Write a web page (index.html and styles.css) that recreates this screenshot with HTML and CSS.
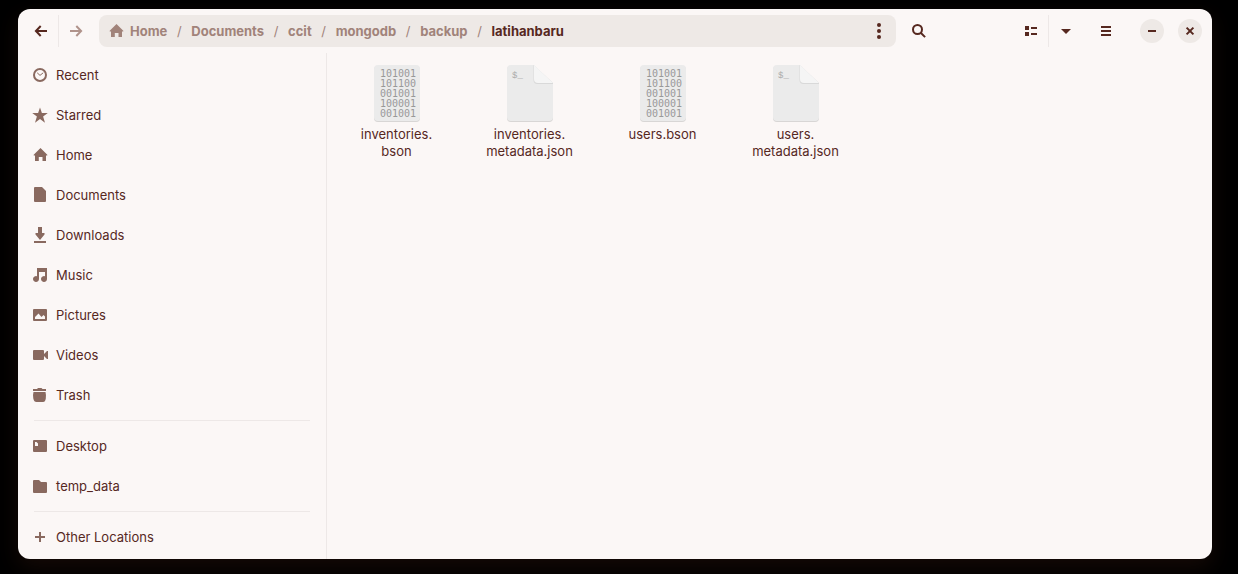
FILE: index.html
```html
<!DOCTYPE html>
<html lang="en">
<head>
<meta charset="utf-8">
<meta name="viewport" content="width=device-width, initial-scale=1">
<title>latihanbaru</title>
<link rel="stylesheet" href="styles.css">
</head>
<body>
<svg class="sprite" aria-hidden="true">
  <symbol id="home" viewBox="0 0 16 16"><path d="M8.5 1 15.3 7.8V8.5H14V14H10.5V10H6.8V14H3V8.5H1.7V7.8Z"/></symbol>
  <symbol id="sheet" viewBox="0 0 46 57">
    <rect y="1" width="46" height="56" rx="4" fill="#d8d6d5"/>
    <rect width="46" height="56" rx="4" fill="#ebebeb"/>
  </symbol>
  <symbol id="folded" viewBox="0 0 46 57">
    <path fill="#d8d6d5" d="M4 1H27L46 19V53a4 4 0 0 1-4 4H4a4 4 0 0 1-4-4V5a4 4 0 0 1 4-4Z"/>
    <path fill="#ebebeb" d="M4 0H27L46 18V52a4 4 0 0 1-4 4H4a4 4 0 0 1-4-4V4a4 4 0 0 1 4-4Z"/>
    <path fill="#d9d9d9" d="M26.5 0V15a4 4 0 0 0 4 4H46V18Z"/>
    <path fill="#f5f5f5" d="M27 0V14a4 4 0 0 0 4 4H46Z"/>
  </symbol>
</svg>

<div class="window">
  <header class="header">
    <div class="linked">
      <button class="tool" type="button" aria-label="Back"><svg class="icon" viewBox="0 0 16 16"><path class="line" d="M14 8H3.5M7.7 3 2.9 8l4.8 5"/></svg></button>
      <button class="tool" type="button" aria-label="Forward" disabled><svg class="icon" viewBox="0 0 16 16"><path class="line" d="M2 8H12.5M8.3 3l4.8 5-4.8 5"/></svg></button>
    </div>
    <div class="pathbar">
      <nav class="crumbs" aria-label="Path">
        <a class="crumb" href="#"><svg class="icon" aria-hidden="true"><use href="#home"/></svg>Home</a><span class="slash">/</span>
        <a class="crumb" href="#">Documents</a><span class="slash">/</span>
        <a class="crumb" href="#">ccit</a><span class="slash">/</span>
        <a class="crumb" href="#">mongodb</a><span class="slash">/</span>
        <a class="crumb" href="#">backup</a><span class="slash">/</span>
        <a class="crumb current" href="#" aria-current="page">latihanbaru</a>
      </nav>
      <button class="tool" type="button" aria-label="Folder menu"><svg class="icon" viewBox="0 0 16 16"><circle cx="8" cy="2" r="2"/><circle cx="8" cy="8" r="2"/><circle cx="8" cy="14" r="2"/></svg></button>
    </div>
    <button class="tool search" type="button" aria-label="Search"><svg class="icon" viewBox="0 0 16 16"><circle class="line" cx="6.5" cy="6.5" r="4.5"/><path class="line" d="m9.7 9.7 4.4 4.4"/></svg></button>
    <div class="linked">
      <button class="tool" type="button" aria-label="List view"><svg class="icon" viewBox="0 0 16 16"><path d="M2 3h4v4H2zM2 9h4v4H2zM8 4h6v2H8zM8 10h6v2H8z"/></svg></button>
      <button class="tool" type="button" aria-label="View options"><svg class="icon" viewBox="0 0 16 16"><path d="M3 6H13L8 11Z"/></svg></button>
    </div>
    <button class="tool" type="button" aria-label="Main menu"><svg class="icon" viewBox="0 0 16 16"><path d="M3 3h10v2H3zM3 7h10v2H3zM3 11h10v2H3z"/></svg></button>
    <div class="controls">
      <button class="round" type="button" aria-label="Minimize"><svg class="icon" viewBox="0 0 16 16"><path d="M4 7h8v2H4z"/></svg></button>
      <button class="round" type="button" aria-label="Close"><svg class="icon" viewBox="0 0 16 16"><path class="line" d="m4.600 4.600 6.800 6.800M11.400 4.600l-6.800 6.800"/></svg></button>
    </div>
  </header>

  <div class="body">
    <nav class="sidebar" aria-label="Places">
      <a class="place" href="#"><svg class="icon" viewBox="0 0 16 16"><circle class="line" cx="8" cy="8" r="6"/><path class="thin" d="M5.2 5.8 8 8.4l3.2-2.6"/></svg>Recent</a>
      <a class="place" href="#"><svg class="icon" viewBox="0 0 16 16"><path d="m8 .4 1.9 5.5h5.900l-4.700 3.600 1.900 6.200L8 12 3 15.700l1.900-6.200L.2 5.900h5.900Z"/></svg>Starred</a>
      <a class="place" href="#"><svg class="icon"><use href="#home"/></svg>Home</a>
      <a class="place" href="#"><svg class="icon" viewBox="0 0 16 16"><path d="M3 0h7l4 4v10a1 1 0 0 1-1 1H3a1 1 0 0 1-1-1V1a1 1 0 0 1 1-1Z"/></svg>Documents</a>
      <a class="place" href="#"><svg class="icon" viewBox="0 0 16 16"><path d="M6 0h4v6h2.500v1.500L8 13 3.500 7.500V6H6ZM2 14h12v2H2z"/></svg>Downloads</a>
      <a class="place" href="#"><svg class="icon" viewBox="0 0 16 16"><path d="M5 1H15V12a3 3 0 1 1-2-2.800V5H7V12a3 3 0 1 1-2-2.800Z"/></svg>Music</a>
      <a class="place" href="#"><svg class="icon" viewBox="0 0 16 16"><path fill-rule="evenodd" d="M2 2h12a1 1 0 0 1 1 1v10a1 1 0 0 1-1 1H2a1 1 0 0 1-1-1V3a1 1 0 0 1 1-1ZM3 12H13V9.500L11.500 8 9.500 10 6.500 6.500 3 10Z"/></svg>Pictures</a>
      <a class="place" href="#"><svg class="icon" viewBox="0 0 16 16"><path d="M2 3h9a1 1 0 0 1 1 1v3l3-3h1v8h-1l-3-3v3a1 1 0 0 1-1 1H2a1 1 0 0 1-1-1V4a1 1 0 0 1 1-1Z"/></svg>Videos</a>
      <a class="place" href="#"><svg class="icon" viewBox="0 0 16 16"><path d="M5 2 6 1H9.500L10.500 2H14V4H1V2ZM1.500 5h12q.8 3 .3 6.500T11 15H4.500Q2 15 1.300 11.500T1.500 5Z"/></svg>Trash</a>
      <hr class="rule">
      <a class="place" href="#"><svg class="icon" viewBox="0 0 16 16"><path fill-rule="evenodd" d="M2 2h12a1 1 0 0 1 1 1v10a1 1 0 0 1-1 1H2a1 1 0 0 1-1-1V3a1 1 0 0 1 1-1ZM3 4V8H6V5.500L4.500 4Z"/></svg>Desktop</a>
      <a class="place" href="#"><svg class="icon" viewBox="0 0 16 16"><path d="M2 2h5l2 2h5a1 1 0 0 1 1 1v9a1 1 0 0 1-1 1H2a1 1 0 0 1-1-1V3a1 1 0 0 1 1-1Z"/></svg>temp_data</a>
      <hr class="rule">
      <a class="place" href="#"><svg class="icon" viewBox="0 0 16 16"><path d="M7 3h2v4h4v2H9v4H7V9H3V7h4z"/></svg>Other Locations</a>
    </nav>
    <main class="files">
      <a class="file" href="#">
        <svg class="thumb" viewBox="0 0 46 57" aria-hidden="true"><use href="#sheet"/><g class="bits"><text x="6" y="12">101001</text><text x="6" y="22">101100</text><text x="6" y="32">001001</text><text x="6" y="42">100001</text><text x="6" y="52">001001</text></g></svg>
        <span>inventories.<br>bson</span>
      </a>
      <a class="file" href="#">
        <svg class="thumb" viewBox="0 0 46 57" aria-hidden="true"><use href="#folded"/><text class="prompt" x="5" y="13">$_</text></svg>
        <span>inventories.<br>metadata.json</span>
      </a>
      <a class="file" href="#">
        <svg class="thumb" viewBox="0 0 46 57" aria-hidden="true"><use href="#sheet"/><g class="bits"><text x="6" y="12">101001</text><text x="6" y="22">101100</text><text x="6" y="32">001001</text><text x="6" y="42">100001</text><text x="6" y="52">001001</text></g></svg>
        <span>users.bson</span>
      </a>
      <a class="file" href="#">
        <svg class="thumb" viewBox="0 0 46 57" aria-hidden="true"><use href="#folded"/><text class="prompt" x="5" y="13">$_</text></svg>
        <span>users.<br>metadata.json</span>
      </a>
    </main>
  </div>
</div>
</body>
</html>
```
FILE: styles.css
```css
:root {
  --ink: #56281f;
  --muted: #a1837a;
  --place: #89695f;
  --surface: #fbf7f6;
  --fill: #eee9e6;
  --line: #ede8e7;
}

* { box-sizing: border-box; }

body {
  display: flex;
  min-height: 100vh;
  margin: 0;
  padding: 9px 26px 15px 18px;
  background: #000;
  color: var(--ink);
  font: 13px/17px Inter, "Liberation Sans", sans-serif;
}

a { color: inherit; text-decoration: none; }

.sprite { position: absolute; width: 0; height: 0; }

.window {
  display: flex;
  flex: 1;
  flex-direction: column;
  min-width: 0;
  border-radius: 12px;
  background: var(--surface);
  box-shadow: 0 8px 22px #160a06;
}

.icon { flex: none; width: 16px; height: 16px; fill: currentColor; }
.line { fill: none; stroke: currentColor; stroke-width: 2px; }
.thin { fill: none; stroke: currentColor; stroke-width: 1px; }

.header {
  display: flex;
  align-items: center;
  gap: 6px;
  padding: 6px 10px 6px 6px;
}

.linked { display: flex; }
.linked .tool + .tool { width: 35px; border-left: 1px solid var(--line); }

.tool,
.round {
  display: flex;
  flex: none;
  align-items: center;
  justify-content: center;
  padding: 0;
  border: 0;
  background: none;
  color: var(--ink);
}

.tool { width: 34px; height: 32px; }
.tool:disabled { color: #b0938b; }

.pathbar {
  display: flex;
  flex: 1;
  min-width: 0;
  border-radius: 8px;
  background: var(--fill);
}

.crumbs {
  display: flex;
  flex: 1;
  align-items: center;
  gap: 9px;
  min-width: 0;
  padding-left: 9px;
  overflow: hidden;
  color: var(--muted);
}

.crumb { display: flex; align-items: center; gap: 6px; font-weight: 700; }
.current { color: var(--ink); }
.slash { width: 6px; text-align: center; }

.search { margin-right: 72px; }

.controls { display: flex; gap: 14px; margin-left: 11px; }
.round { width: 24px; height: 24px; border-radius: 50%; background: var(--fill); }

.body { display: flex; flex: 1; }

.sidebar {
  flex: none;
  width: 309px;
  padding: 2px 16px 2px 14px;
  border-right: 1px solid var(--line);
}

.place { display: flex; align-items: center; gap: 8px; height: 40px; }
.place .icon { color: var(--place); }

.rule { margin: 5px 0 5px 2px; border: 0; border-top: 1px solid var(--line); }

.files {
  display: grid;
  flex: 1;
  grid-template-columns: repeat(auto-fill, 133px);
  align-content: start;
  padding: 12px 3px;
}

.file {
  display: flex;
  flex-direction: column;
  align-items: center;
  gap: 4px;
  text-align: center;
}

.thumb { width: 46px; height: 57px; }
.bits { fill: #999; font: 10px "Liberation Sans Narrow", "DejaVu Sans Mono", monospace; }
.prompt { fill: #a9a9a9; font: 9px "Liberation Mono", monospace; }
```
